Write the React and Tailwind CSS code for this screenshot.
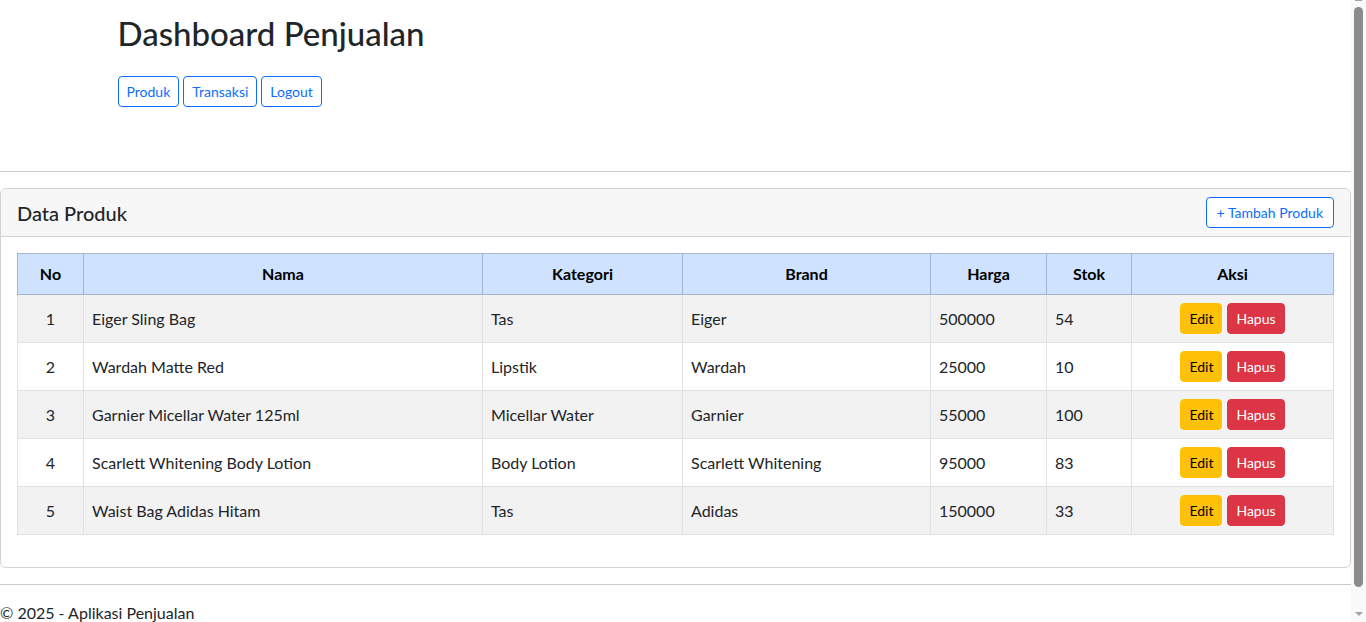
const rows = [
  [1, 'Eiger Sling Bag', 'Tas', 'Eiger', '500000', '54'],
  [2, 'Wardah Matte Red', 'Lipstik', 'Wardah', '25000', '10'],
  [3, 'Garnier Micellar Water 125ml', 'Micellar Water', 'Garnier', '55000', '100'],
  [4, 'Scarlett Whitening Body Lotion', 'Body Lotion', 'Scarlett Whitening', '95000', '83'],
  [5, 'Waist Bag Adidas Hitam', 'Tas', 'Adidas', '150000', '33'],
];

function OutlineBtn({ children, wide }) {
  return (
    <button
      className={
        'border border-[#0d6efd] text-[#0d6efd] rounded-[4px] py-1 text-[14px] leading-[21px] bg-white ' +
        (wide ? 'px-[10px]' : 'px-2')
      }
    >
      {children}
    </button>
  );
}

export default function App() {
  return (
    <div className="flex h-screen overflow-hidden bg-white text-[#212529] font-['Lato',sans-serif] text-[16px] leading-[24px]">
      <main className="flex-1 min-w-0">
        <div className="mx-auto w-[1140px] px-3 pt-[14px] pb-12">
          <h1 className="text-[33px] font-medium leading-[38px] mb-6">Dashboard Penjualan</h1>
          <div className="flex gap-1">
            <OutlineBtn>Produk</OutlineBtn>
            <OutlineBtn>Transaksi</OutlineBtn>
            <OutlineBtn>Logout</OutlineBtn>
          </div>
        </div>
        <hr className="border-0 border-t border-[#c8c9ca] my-4" />
        <div className="border border-[#d3d3d3] rounded-[6px]">
          <div className="flex items-center justify-between px-4 py-2 bg-[#f7f7f7] border-b border-[#d3d3d3] rounded-t-[6px]">
            <h5 className="text-[20px] font-medium leading-[24px]">Data Produk</h5>
            <OutlineBtn wide>+ Tambah Produk</OutlineBtn>
          </div>
          <div className="p-4">
            <table className="w-full table-fixed border-collapse mb-4">
              <colgroup>
                <col className="w-[66px]" />
                <col className="w-[399px]" />
                <col className="w-[200px]" />
                <col className="w-[248px]" />
                <col className="w-[116px]" />
                <col className="w-[85px]" />
                <col />
              </colgroup>
              <thead>
                <tr>
                  {['No', 'Nama', 'Kategori', 'Brand', 'Harga', 'Stok', 'Aksi'].map((h) => (
                    <th key={h} className="bg-[#cfe2ff] border border-[#a6b5cc] px-2 py-2 font-bold text-center text-black">
                      {h}
                    </th>
                  ))}
                </tr>
              </thead>
              <tbody>
                {rows.map((r, i) => (
                  <tr key={r[0]} className={i % 2 === 0 ? 'bg-[#f2f2f2]' : 'bg-white'}>
                    <td className="border border-[#dee2e6] px-2 py-2 text-center">{r[0]}</td>
                    <td className="border border-[#dee2e6] px-2 py-2">{r[1]}</td>
                    <td className="border border-[#dee2e6] px-2 py-2">{r[2]}</td>
                    <td className="border border-[#dee2e6] px-2 py-2">{r[3]}</td>
                    <td className="border border-[#dee2e6] px-2 py-2">{r[4]}</td>
                    <td className="border border-[#dee2e6] px-2 py-2">{r[5]}</td>
                    <td className="border border-[#dee2e6] px-2 py-2">
                      <div className="flex justify-center gap-[5px]">
                        <button className="bg-[#ffc107] border border-[#ffc107] text-black rounded-[4px] px-2 py-1 text-[14px] leading-[21px]">Edit</button>
                        <button className="bg-[#dc3545] border border-[#dc3545] text-white rounded-[4px] px-2 py-1 text-[14px] leading-[21px]">Hapus</button>
                      </div>
                    </td>
                  </tr>
                ))}
              </tbody>
            </table>
          </div>
        </div>
        <hr className="border-0 border-t border-[#c8c9ca] my-4" />
        <footer className="pb-6">© 2025 - Aplikasi Penjualan</footer>
      </main>
      <aside className="w-[15px] shrink-0 flex flex-col items-center bg-[#f9f9f9]">
        <div className="h-[1px] w-[7px] bg-[#a3a3a3]" />
        <div className="mt-[6px] h-[580px] w-[9px] rounded-full bg-[#8b8b8b]" />
        <div className="mt-[25px] w-0 h-0 border-l-[4px] border-r-[4px] border-t-[4px] border-l-transparent border-r-transparent border-t-[#a3a3a3]" />
      </aside>
    </div>
  );
}
